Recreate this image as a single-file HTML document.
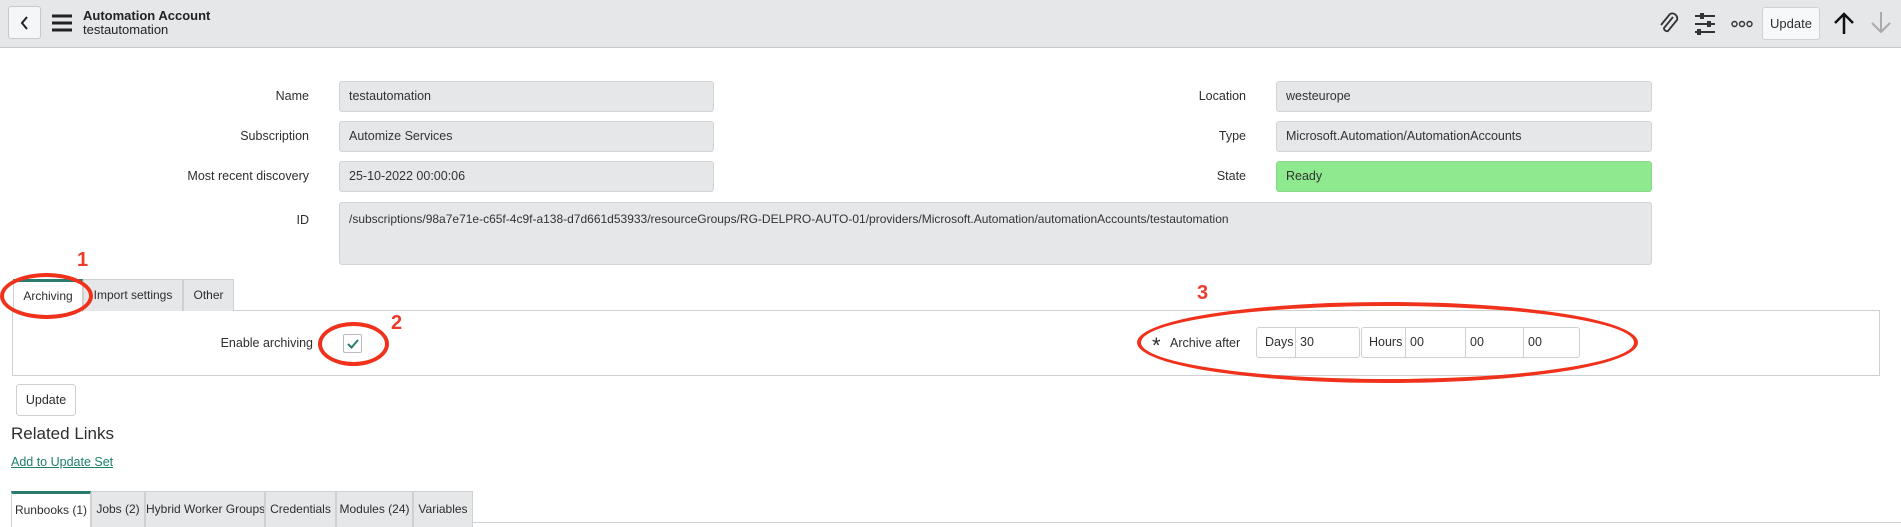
<!DOCTYPE html>
<html><head><meta charset="utf-8"><style>
*{box-sizing:border-box;margin:0;padding:0}
body{width:1901px;height:526px;overflow:hidden;background:#fff;font-family:"Liberation Sans",sans-serif;font-size:12.5px;color:#2e2e2e;position:relative}
.a{position:absolute}
.hdr{left:0;top:0;width:1901px;height:48px;background:#e6e7e9;border-bottom:1px solid #c9cacc}
.lbl{text-align:right;width:200px;line-height:31px}
.inp{background:#e6e7e9;border:1px solid #d2d3d5;border-radius:3px;padding:0 9px;line-height:29px;color:#333;white-space:nowrap;overflow:hidden}
.tab{top:279px;height:32px;background:#e6e7e9;border:1px solid #cfd0d2;border-bottom:none;text-align:center;line-height:30px;white-space:nowrap;font-size:12px;overflow:hidden}
.btab{top:491px;height:36px;background:#e6e7e9;border:1px solid #cfd0d2;border-bottom:none;text-align:center;line-height:34px;white-space:nowrap;font-size:12px;overflow:hidden}
.grp{border:1px solid #cfd0d2;height:31px;line-height:29px;border-radius:3px;background:#fff}
.grp b{font-weight:normal;position:absolute;top:-1px;height:31px;line-height:31px;border-left:1px solid #cfd0d2;padding-left:4px;display:block}
.ring{border:4px solid #f0321c;border-radius:50%}
.num{color:#ee3a2a;font-weight:bold;font-size:20px}
</style></head><body>
<div class="a hdr"></div>
<div class="a" style="left:8px;top:6px;width:33px;height:33px;border:1px solid #c8c9cb;border-radius:3px;background:#f5f6f7"></div>
<svg class="a" style="left:19px;top:15px" width="12" height="16"><path d="M8 2 L3 8 L8 14" stroke="#222" stroke-width="2" fill="none"/></svg>
<svg class="a" style="left:51px;top:14px" width="22" height="18"><path d="M1 2H21M1 9H21M1 16H21" stroke="#222" stroke-width="3"/></svg>
<div class="a" style="left:83px;top:8px;font-weight:bold;font-size:13px;color:#222">Automation Account</div>
<div class="a" style="left:83px;top:22px;font-size:13px;color:#222">testautomation</div>
<svg class="a" style="left:1657px;top:11px" width="22" height="24"><path d="M16 6 L7 17 a3 3 0 0 0 4 3 L20 9 a5 5 0 0 0 -7 -6 L4 14" stroke="#333" stroke-width="1.8" fill="none"/></svg>
<svg class="a" style="left:1694px;top:12px" width="22" height="24"><path d="M1 4H21M1 12H21M1 20H21" stroke="#333" stroke-width="2"/><rect x="6" y="1" width="4" height="6" fill="#333"/><rect x="13" y="9" width="4" height="6" fill="#333"/><rect x="3" y="17" width="4" height="6" fill="#333"/></svg>
<svg class="a" style="left:1731px;top:20px" width="22" height="8"><circle cx="3.5" cy="4" r="2.5" stroke="#333" stroke-width="1.4" fill="none"/><circle cx="11" cy="4" r="2.5" stroke="#333" stroke-width="1.4" fill="none"/><circle cx="18.5" cy="4" r="2.5" stroke="#333" stroke-width="1.4" fill="none"/></svg>
<div class="a" style="left:1762px;top:7px;width:58px;height:33px;border:1px solid #d0d1d3;border-radius:3px;background:#f7f8f9;text-align:center;line-height:31px;font-size:13px">Update</div>
<svg class="a" style="left:1833px;top:11px" width="22" height="24"><path d="M11 23V3M2 12L11 3L20 12" stroke="#111" stroke-width="2.5" fill="none"/></svg>
<svg class="a" style="left:1870px;top:11px" width="22" height="24"><path d="M11 1V21M2 12L11 21L20 12" stroke="#aaa" stroke-width="2" fill="none"/></svg>

<div class="a lbl" style="left:109px;top:81px">Name</div>
<div class="a inp" style="left:339px;top:81px;width:375px;height:31px">testautomation</div>
<div class="a lbl" style="left:109px;top:121px">Subscription</div>
<div class="a inp" style="left:339px;top:121px;width:375px;height:31px">Automize Services</div>
<div class="a lbl" style="left:109px;top:161px">Most recent discovery</div>
<div class="a inp" style="left:339px;top:161px;width:375px;height:31px">25-10-2022 00:00:06</div>
<div class="a lbl" style="left:109px;top:205px">ID</div>
<div class="a inp" style="left:339px;top:202px;width:1313px;height:63px;line-height:32px;font-size:12px">/subscriptions/98a7e71e-c65f-4c9f-a138-d7d661d53933/resourceGroups/RG-DELPRO-AUTO-01/providers/Microsoft.Automation/automationAccounts/testautomation</div>
<div class="a lbl" style="left:1046px;top:81px">Location</div>
<div class="a inp" style="left:1276px;top:81px;width:376px;height:31px">westeurope</div>
<div class="a lbl" style="left:1046px;top:121px">Type</div>
<div class="a inp" style="left:1276px;top:121px;width:376px;height:31px">Microsoft.Automation/AutomationAccounts</div>
<div class="a lbl" style="left:1046px;top:161px">State</div>
<div class="a inp" style="left:1276px;top:161px;width:376px;height:31px;background:#8fea8f;border-color:#8ad88a">Ready</div>

<div class="a" style="left:12px;top:310px;width:1868px;height:66px;border:1px solid #cfd0d2"></div>
<div class="a tab" style="left:13px;width:70px;background:#fff;border-top:3px solid #2a7a6e;height:33px;line-height:28px">Archiving</div>
<div class="a tab" style="left:83px;width:100px">Import settings</div>
<div class="a tab" style="left:183px;width:51px">Other</div>
<div class="a" style="left:113px;top:334px;width:200px;text-align:right;line-height:18px">Enable archiving</div>
<div class="a" style="left:343px;top:334px;width:19px;height:19px;border:1px solid #bbb;border-radius:2px;background:#fff"></div>
<svg class="a" style="left:346px;top:338px" width="14" height="12"><path d="M2 6L5.5 9.5L12 2" stroke="#2a7a6e" stroke-width="2" fill="none"/></svg>
<div class="a" style="left:1152px;top:334px;font-size:22px;line-height:24px">*</div>
<div class="a" style="left:1170px;top:334px;line-height:18px">Archive after</div>
<div class="a grp" style="left:1256px;top:327px;width:104px"><span style="padding-left:8px">Days</span><b style="left:38px;width:65px">30</b></div>
<div class="a grp" style="left:1361px;top:327px;width:219px"><span style="padding-left:7px">Hours</span><b style="left:43px;width:60px">00</b><b style="left:103px;width:58px">00</b><b style="left:161px;width:57px">00</b></div>

<div class="a" style="left:16px;top:384px;width:60px;height:32px;border:1px solid #cfd0d2;border-radius:3px;text-align:center;line-height:30px">Update</div>
<div class="a" style="left:11px;top:424px;font-size:17px">Related Links</div>
<div class="a" style="left:11px;top:455px;color:#1e7f6c;text-decoration:underline">Add to Update Set</div>
<div class="a" style="left:11px;top:522px;width:1890px;height:1px;background:#cfd0d2"></div>
<div class="a btab" style="left:11px;width:80px;background:#fff;border-top:3px solid #2a7a6e;line-height:32px">Runbooks (1)</div>
<div class="a btab" style="left:91px;width:54px">Jobs (2)</div>
<div class="a btab" style="left:145px;width:120px">Hybrid Worker Groups</div>
<div class="a btab" style="left:265px;width:71px">Credentials</div>
<div class="a btab" style="left:336px;width:77px">Modules (24)</div>
<div class="a btab" style="left:413px;width:60px">Variables</div>

<div class="a ring" style="left:0px;top:273px;width:93px;height:46px"></div>
<div class="a num" style="left:77px;top:249px">1</div>
<div class="a ring" style="left:318px;top:322px;width:71px;height:44px"></div>
<div class="a num" style="left:391px;top:312px">2</div>
<div class="a ring" style="left:1137px;top:302px;width:501px;height:81px"></div>
<div class="a num" style="left:1197px;top:282px">3</div>
</body></html>
